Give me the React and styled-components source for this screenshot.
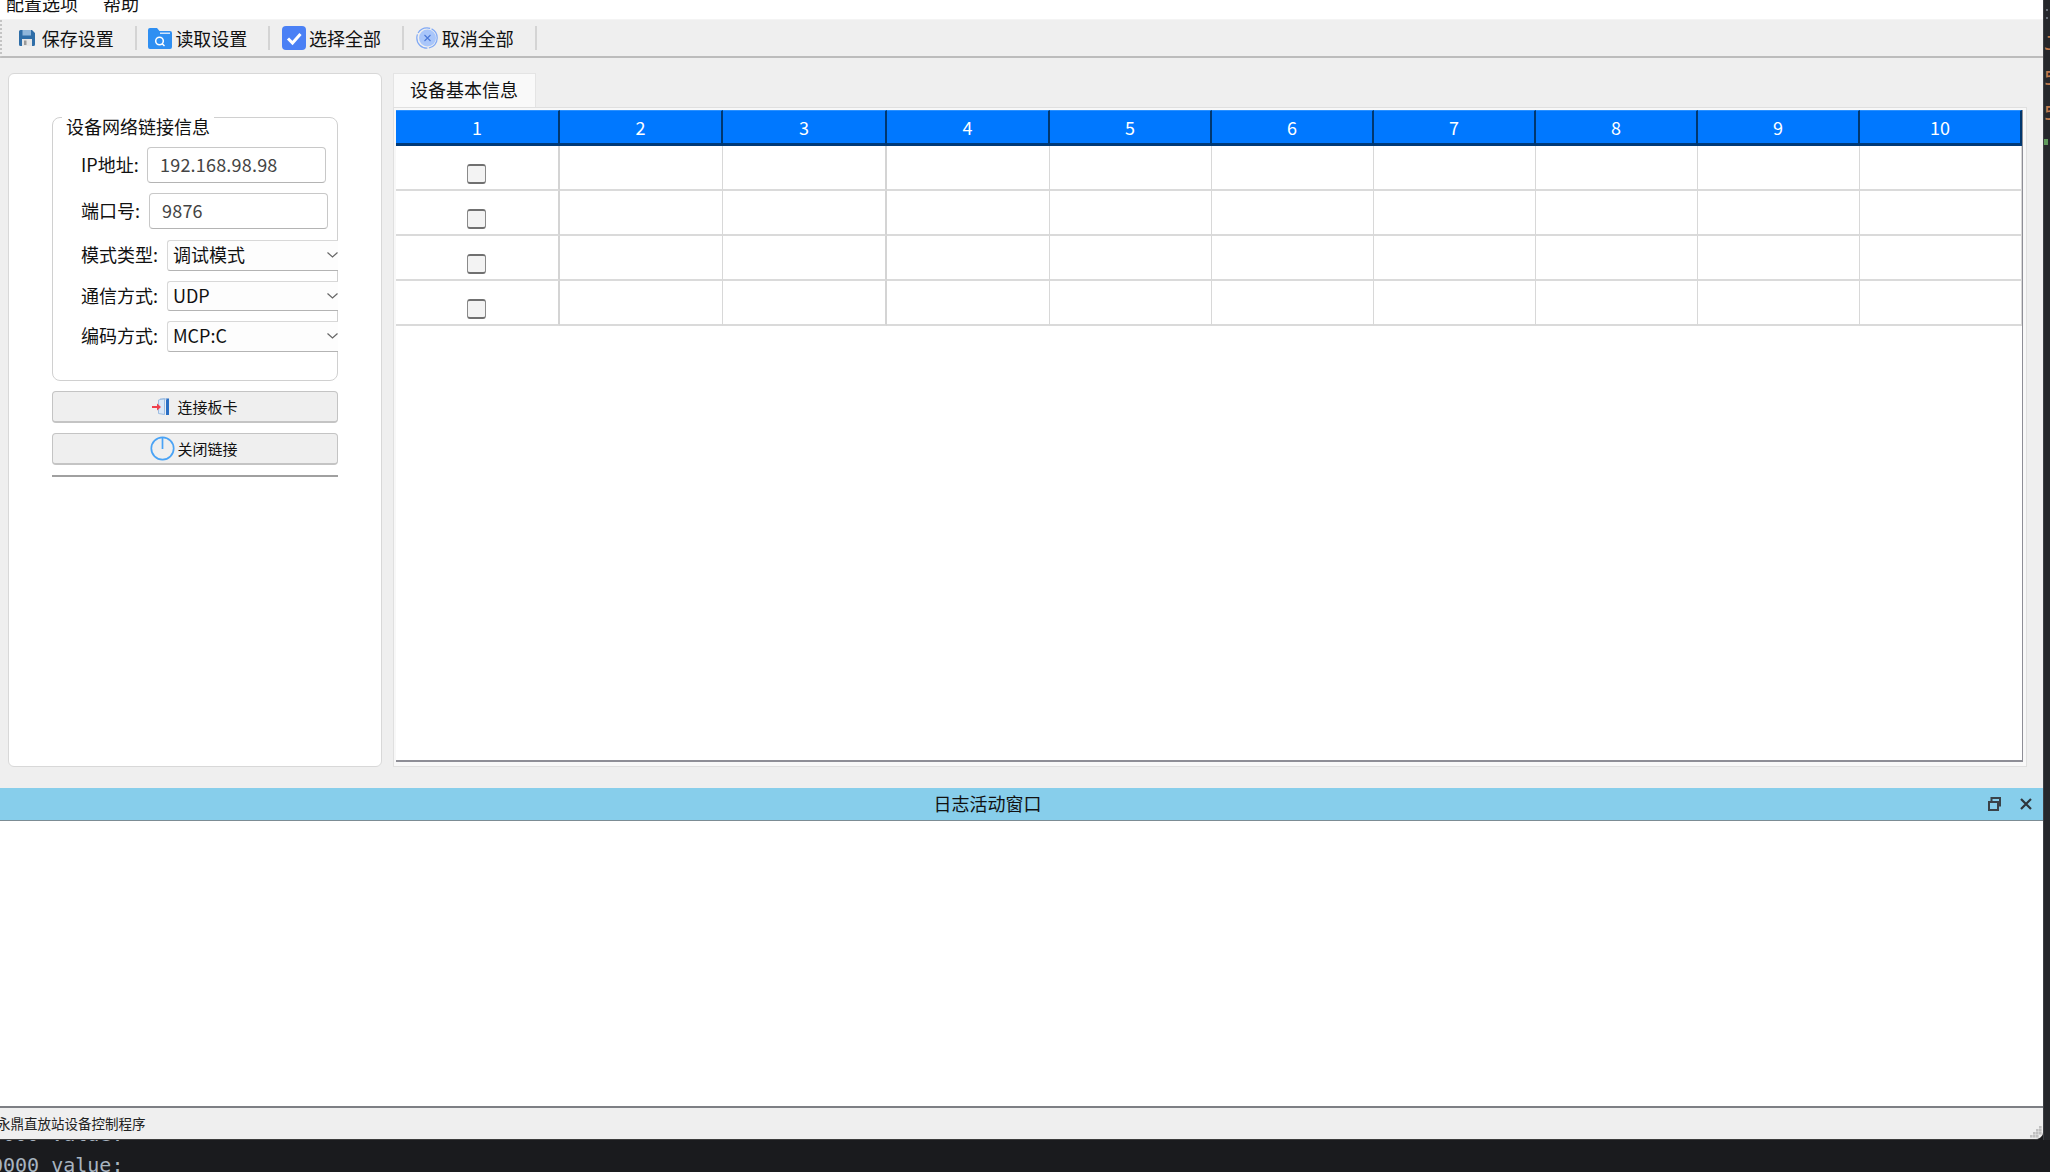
import React from "react";
import styled, { createGlobalStyle } from "styled-components";

const GlobalStyle = createGlobalStyle`
	html, body {
		margin: 0;
		padding: 0;
		background: #1a1b1e;
		overflow: hidden;
	}
	* {
		box-sizing: border-box;
	}
`;

const COLUMNS = [164, 163, 164, 163, 162, 162, 162, 162, 162, 162];
const GRID_COLUMNS = COLUMNS.map((w) => `${w}px`).join(" ");
const THICK_AFTER = [1, 3];

const Desktop = styled.div`
	display: grid;
	grid-template-columns: 2043px 7px;
	grid-template-rows: 1140px 32px;
	width: 2050px;
	height: 1172px;
	font-family: "Noto Sans CJK SC", "Liberation Sans", sans-serif;
	font-size: 18px;
	color: #111;
`;

const AppWindow = styled.div`
	display: flex;
	flex-direction: column;
	background: #efefef;
	border-bottom: 1px solid #3c3c3c;
	border-bottom-right-radius: 8px;
	overflow: hidden;
`;

const MenuBar = styled.div`
	display: flex;
	flex: none;
	gap: 25px;
	height: 20px;
	padding-left: 6px;
	background: #fff;
	border-bottom: 1px solid #f4f4f4;
	overflow: hidden;
`;

const MenuItem = styled.div`
	line-height: 6px;
`;

const Toolbar = styled.div`
	display: flex;
	flex: none;
	align-items: center;
	height: 38px;
	padding-left: 4px;
	background: #efefef;
	border-bottom: 2px solid #bcbcbc;
	border-left: 2px dotted #c4c4c4;
`;

const ToolButton = styled.div`
	display: flex;
	align-items: center;
	gap: ${(p) => p.$gap}px;
	padding: 0 21px 0 11.7px;
	line-height: 28px;
	white-space: nowrap;
`;

const ToolSeparator = styled.div`
	width: 2px;
	height: 24px;
	background: #d4d4d4;
`;

const MainArea = styled.div`
	display: flex;
	flex: none;
	gap: 11px;
	height: 730px;
	padding: 15px 0 21px 8px;
`;

const SidePanel = styled.div`
	flex: none;
	width: 374px;
	padding: 43px 43px 0;
	background: #fff;
	border: 1px solid #d8d8d8;
	border-radius: 6px;
`;

const GroupBox = styled.div`
	display: flex;
	flex-direction: column;
	gap: 10px;
	height: 264px;
	padding-top: 29px;
	border: 1px solid #d0d0d0;
	border-radius: 8px;
`;

const GroupWrap = styled.div`
	position: relative;
`;

const GroupTitle = styled.div`
	position: absolute;
	top: -1px;
	left: 10px;
	padding: 0 4px 0 4px;
	line-height: 20px;
	background: #fff;
	white-space: nowrap;
	z-index: 1;
`;

const FieldRow = styled.div`
	display: flex;
	align-items: center;
	padding-left: 28px;
	&:nth-child(2) {
		margin-bottom: 1px;
	}
`;

const FieldLabel = styled.div`
	flex: none;
	width: ${(p) => p.$width}px;
	margin-bottom: 2px;
	line-height: 26px;
	white-space: nowrap;
`;

const TextInput = styled.div`
	flex: none;
	width: 179px;
	height: 36px;
	padding-left: 12px;
	line-height: 32px;
	letter-spacing: 0.2px;
	color: #444;
	background: #fff;
	border: 1px solid #c8c8c8;
	border-bottom-color: #b4b4b4;
	border-radius: 4px;
`;

const ComboBox = styled.div`
	display: flex;
	flex: none;
	align-items: center;
	justify-content: space-between;
	width: 171px;
	height: 30.5px;
	padding: 0 0 0 5px;
	line-height: 26px;
	background: #fdfdfd;
	border: 1px solid #d8d8d8;
	border-right: none;
	border-bottom-color: #b4b4b4;
	border-top-left-radius: 3px;
	border-bottom-left-radius: 3px;
`;

const ComboValue = styled.div`
	margin-bottom: 2px;
`;

const PanelButton = styled.div`
	display: flex;
	align-items: center;
	justify-content: center;
	gap: ${(p) => p.$gap}px;
	height: 32px;
	margin-top: 10px;
	padding-right: ${(p) => p.$shift}px;
	font-size: 15px;
	background: #efefef;
	border: 1px solid #c4c4c4;
	border-bottom-width: 2px;
	border-radius: 4px;
`;

const PanelRule = styled.div`
	height: 2px;
	margin-top: 10px;
	background: #a0a0a0;
`;

const TabColumn = styled.div`
	display: flex;
	flex: none;
	flex-direction: column;
	width: 1634px;
`;

const TabBar = styled.div`
	display: flex;
	flex: none;
	height: 34px;
`;

const Tab = styled.div`
	width: 143px;
	padding-left: 16px;
	line-height: 31px;
	background: #f9f9f9;
	border: 1px solid #e4e4e4;
	border-bottom: none;
`;

const TabPane = styled.div`
	flex: 1;
	padding: 2px 4px 4px 2px;
	background: #f8f8f8;
	border: 1px solid #e0e0e0;
`;

const TableFrame = styled.div`
	width: 1627px;
	height: 100%;
	background: #fff;
	border-right: 1px solid #8e8e96;
	border-bottom: 2px solid #8e8e96;
`;

const TableRow = styled.div`
	display: grid;
	grid-template-columns: ${GRID_COLUMNS};
`;

const HeaderCell = styled.div`
	height: 36px;
	line-height: 32px;
	text-align: center;
	color: #fff;
	background: #0078ff;
	border-top: 1px solid #2a90ff;
	border-right: 2px solid #00376f;
	border-bottom: 3px solid #003a78;
`;

const BodyCell = styled.div`
	display: flex;
	align-items: center;
	justify-content: center;
	height: 45px;
	padding-top: 13px;
	background: #fff;
	border-bottom: 2px solid #dadada;
	border-right: ${(p) => (p.$thick ? "2px solid #d4d4d4" : "1px solid #d8d8d8")};
`;

const RowCheck = styled.input.attrs({ type: "checkbox" })`
	appearance: none;
	width: 19px;
	height: 20px;
	margin: 0 0 0 -2px;
	background: #f3f3f3;
	border: 1px solid #8a8a8a;
	border-top: 2px solid #707070;
	border-bottom: 2px solid #707070;
	border-radius: 3px;
`;

const DockTitleBar = styled.div`
	display: flex;
	flex: none;
	align-items: center;
	height: 33px;
	background: #87ceeb;
	border-bottom: 1px solid #7c8c94;
`;

const DockTitle = styled.div`
	flex: 1;
	line-height: 24px;
	margin-bottom: 2px;
	text-align: center;
`;

const DockButtons = styled.div`
	display: flex;
	flex: none;
	align-items: center;
	gap: 19px;
	width: 68px;
	padding-left: 13px;
`;

const LogArea = styled.div`
	flex: none;
	height: 287px;
	background: #fff;
	border-bottom: 2px solid #7d7f84;
`;

const StatusBar = styled.div`
	display: flex;
	flex: 1;
	align-items: center;
	justify-content: space-between;
	background: #efefef;
	font-size: 13.5px;
`;

const StatusText = styled.div`
	margin: 0 0 2px -3px;
	line-height: 20px;
	color: #222;
	white-space: nowrap;
`;

const SizeGrip = styled.svg`
	align-self: flex-end;
	margin: 0 1px 1px 0;
`;

const SideStrip = styled.div`
	display: flex;
	flex-direction: column;
	background: #25272b;
	border-left: 1px solid #3c3f44;
	overflow: hidden;
`;

const StripDots = styled.svg`
	flex: none;
	margin-bottom: 5px;
`;

const StripLine = styled.div`
	flex: none;
	height: 35px;
	font-family: "DejaVu Sans Mono", monospace;
	font-size: 20px;
	line-height: 35px;
	color: #c07a4e;
`;

const StripMark = styled.div`
	flex: none;
	width: 4px;
	height: 6px;
	margin-top: 8px;
	background: #5f9a5c;
`;

const Terminal = styled.div`
	grid-column: 1 / span 2;
	overflow: hidden;
	background: #1a1b1e;
`;

const TerminalLine = styled.div`
	height: 30px;
	margin-left: -9px;
	font-family: "DejaVu Sans Mono", monospace;
	font-size: 20px;
	line-height: 30px;
	color: #a8b4c0;
	white-space: pre;
	&:first-child {
		height: 31px;
		margin-top: -21px;
	}
`;

const SaveIcon = () => (
	<svg width="18" height="18" viewBox="0 0 18 18">
		<path d="M1 2.5 A1.5 1.5 0 0 1 2.5 1 H14 L17 4 V15.5 A1.5 1.5 0 0 1 15.5 17 H2.5 A1.5 1.5 0 0 1 1 15.5 Z" fill="#2f6ea8" />
		<rect x="4.5" y="1" width="8.5" height="5.5" fill="#8fb6da" />
		<rect x="4" y="10" width="10" height="7" fill="#e6e6e6" />
		<rect x="6" y="11.5" width="2.5" height="4.5" fill="#9a9a9a" />
	</svg>
);

const FolderIcon = () => (
	<svg width="24" height="21" viewBox="0 0 24 21">
		<path d="M0 2 A2 2 0 0 1 2 0 H9 L11.5 3 H22 A2 2 0 0 1 24 5 V19 A2 2 0 0 1 22 21 H2 A2 2 0 0 1 0 19 Z" fill="#2f8ff2" />
		<rect x="12" y="4.5" width="10" height="1.5" fill="#cfe4fb" />
		<circle cx="11.5" cy="13" r="3.8" fill="none" stroke="#fff" strokeWidth="1.5" />
		<path d="M14.2 15.8 L16.5 18" stroke="#fff" strokeWidth="1.5" />
	</svg>
);

const CheckIcon = () => (
	<svg width="24" height="24" viewBox="0 0 24 24">
		<rect width="24" height="24" rx="4" fill="#4a80f5" />
		<path d="M6 12.5 L10.5 17 L18.5 8" fill="none" stroke="#fff" strokeWidth="3" />
	</svg>
);

const CancelIcon = () => (
	<svg width="22" height="22" viewBox="0 0 22 22">
		<circle cx="11" cy="11" r="10.2" fill="none" stroke="#7fa8f5" strokeWidth="1.2" strokeDasharray="14 1.5 20 1.5" />
		<circle cx="11.5" cy="11" r="8.5" fill="#a9c6fa" />
		<path d="M8.5 8 L14.5 14 M14.5 8 L8.5 14" stroke="#4a78d8" strokeWidth="1.1" />
	</svg>
);

const DoorIcon = () => (
	<svg width="18" height="18" viewBox="0 0 18 18">
		<path d="M6.5 2 L12.5 0.5 V16.5 L6.5 15.5 Z" fill="#dbe8f7" stroke="#9dbde2" strokeWidth="1" />
		<rect x="14" y="0.5" width="3" height="16.5" fill="#2b6fc4" />
		<path d="M8 1 H15" stroke="#9dbde2" strokeWidth="1" />
		<path d="M0 9 H7" stroke="#f0404c" strokeWidth="2" />
		<path d="M5 5.5 L9 9 L5 12.5 Z" fill="#f0404c" />
	</svg>
);

const PowerIcon = () => (
	<svg width="25" height="25" viewBox="0 0 25 25">
		<circle cx="12.5" cy="12.5" r="11.2" fill="none" stroke="#4aa3f5" strokeWidth="1.7" />
		<path d="M12.5 1.5 V13" stroke="#4aa3f5" strokeWidth="1.7" />
	</svg>
);

const Chevron = () => (
	<svg width="11" height="6" viewBox="0 0 11 6">
		<path d="M0.5 0.5 L5.5 5 L10.5 0.5" fill="none" stroke="#666" strokeWidth="1.2" />
	</svg>
);

const RestoreIcon = () => (
	<svg width="13" height="14" viewBox="0 0 13 14">
		<path d="M3.5 4 V1 H12 V8.5 H10" fill="none" stroke="#3a4248" strokeWidth="2" />
		<rect x="1" y="5" width="9" height="8" fill="none" stroke="#3a4248" strokeWidth="2" />
	</svg>
);

const CloseIcon = () => (
	<svg width="12" height="12" viewBox="0 0 12 12">
		<path d="M1 1 L11 11 M11 1 L1 11" stroke="#2f363c" strokeWidth="2.2" />
	</svg>
);

const GRIP_DOTS = [
	[9, 0],
	[6, 3],
	[9, 3],
	[3, 6],
	[6, 6],
	[9, 6],
	[0, 9],
	[3, 9],
	[6, 9],
];

const Grip = () => (
	<SizeGrip width="12" height="12" viewBox="0 0 12 12">
		{GRIP_DOTS.map(([x, y]) => (
			<rect key={`${x}-${y}`} x={x} y={y} width="2.6" height="2.6" fill="#c0c0c0" />
		))}
	</SizeGrip>
);

const TOOLS = [
	{ label: "保存设置", icon: <SaveIcon />, gap: 6 },
	{ label: "读取设置", icon: <FolderIcon />, gap: 3 },
	{ label: "选择全部", icon: <CheckIcon />, gap: 3 },
	{ label: "取消全部", icon: <CancelIcon />, gap: 4 },
];

const COMBOS = [
	{ label: "模式类型:", value: "调试模式" },
	{ label: "通信方式:", value: "UDP" },
	{ label: "编码方式:", value: "MCP:C" },
];

const App = () => {
	return (
		<Desktop>
			<GlobalStyle />
			<AppWindow>
				<MenuBar>
					<MenuItem>配置选项</MenuItem>
					<MenuItem>帮助</MenuItem>
				</MenuBar>
				<Toolbar>
					{TOOLS.map((tool) => (
						<React.Fragment key={tool.label}>
							<ToolButton $gap={tool.gap}>
								{tool.icon}
								{tool.label}
							</ToolButton>
							<ToolSeparator />
						</React.Fragment>
					))}
				</Toolbar>
				<MainArea>
					<SidePanel>
						<GroupWrap>
							<GroupTitle>设备网络链接信息</GroupTitle>
							<GroupBox>
								<FieldRow>
									<FieldLabel $width={66}>IP地址:</FieldLabel>
									<TextInput>192.168.98.98</TextInput>
								</FieldRow>
								<FieldRow>
									<FieldLabel $width={68}>端口号:</FieldLabel>
									<TextInput>9876</TextInput>
								</FieldRow>
								{COMBOS.map((combo) => (
									<FieldRow key={combo.label}>
										<FieldLabel $width={86}>{combo.label}</FieldLabel>
										<ComboBox>
											<ComboValue>{combo.value}</ComboValue>
											<Chevron />
										</ComboBox>
									</FieldRow>
								))}
							</GroupBox>
						</GroupWrap>
						<PanelButton $gap={7} $shift={0}>
							<DoorIcon />
							连接板卡
						</PanelButton>
						<PanelButton $gap={2} $shift={2}>
							<PowerIcon />
							关闭链接
						</PanelButton>
						<PanelRule />
					</SidePanel>
					<TabColumn>
						<TabBar>
							<Tab>设备基本信息</Tab>
						</TabBar>
						<TabPane>
							<TableFrame>
								<TableRow>
									{COLUMNS.map((_, i) => (
										<HeaderCell key={i}>{i + 1}</HeaderCell>
									))}
								</TableRow>
								{[0, 1, 2, 3].map((row) => (
									<TableRow key={row}>
										{COLUMNS.map((_, i) => (
											<BodyCell key={i} $thick={THICK_AFTER.includes(i + 1)}>
												{i === 0 && <RowCheck />}
											</BodyCell>
										))}
									</TableRow>
								))}
							</TableFrame>
						</TabPane>
					</TabColumn>
				</MainArea>
				<DockTitleBar>
					<DockTitle>日志活动窗口</DockTitle>
					<DockButtons>
						<RestoreIcon />
						<CloseIcon />
					</DockButtons>
				</DockTitleBar>
				<LogArea />
				<StatusBar>
					<StatusText>永鼎直放站设备控制程序</StatusText>
					<Grip />
				</StatusBar>
			</AppWindow>
			<SideStrip>
				<StripDots width="6" height="21" viewBox="0 0 6 21">
					<rect x="2" y="9" width="2" height="2" fill="#6a7078" />
					<rect x="2" y="17" width="2" height="2" fill="#6a7078" />
				</StripDots>
				<StripLine>J</StripLine>
				<StripLine>5</StripLine>
				<StripLine>5</StripLine>
				<StripMark />
			</SideStrip>
			<Terminal>
				<TerminalLine>0000 value:</TerminalLine>
				<TerminalLine>0000 value:</TerminalLine>
			</Terminal>
		</Desktop>
	);
};

export default App;
